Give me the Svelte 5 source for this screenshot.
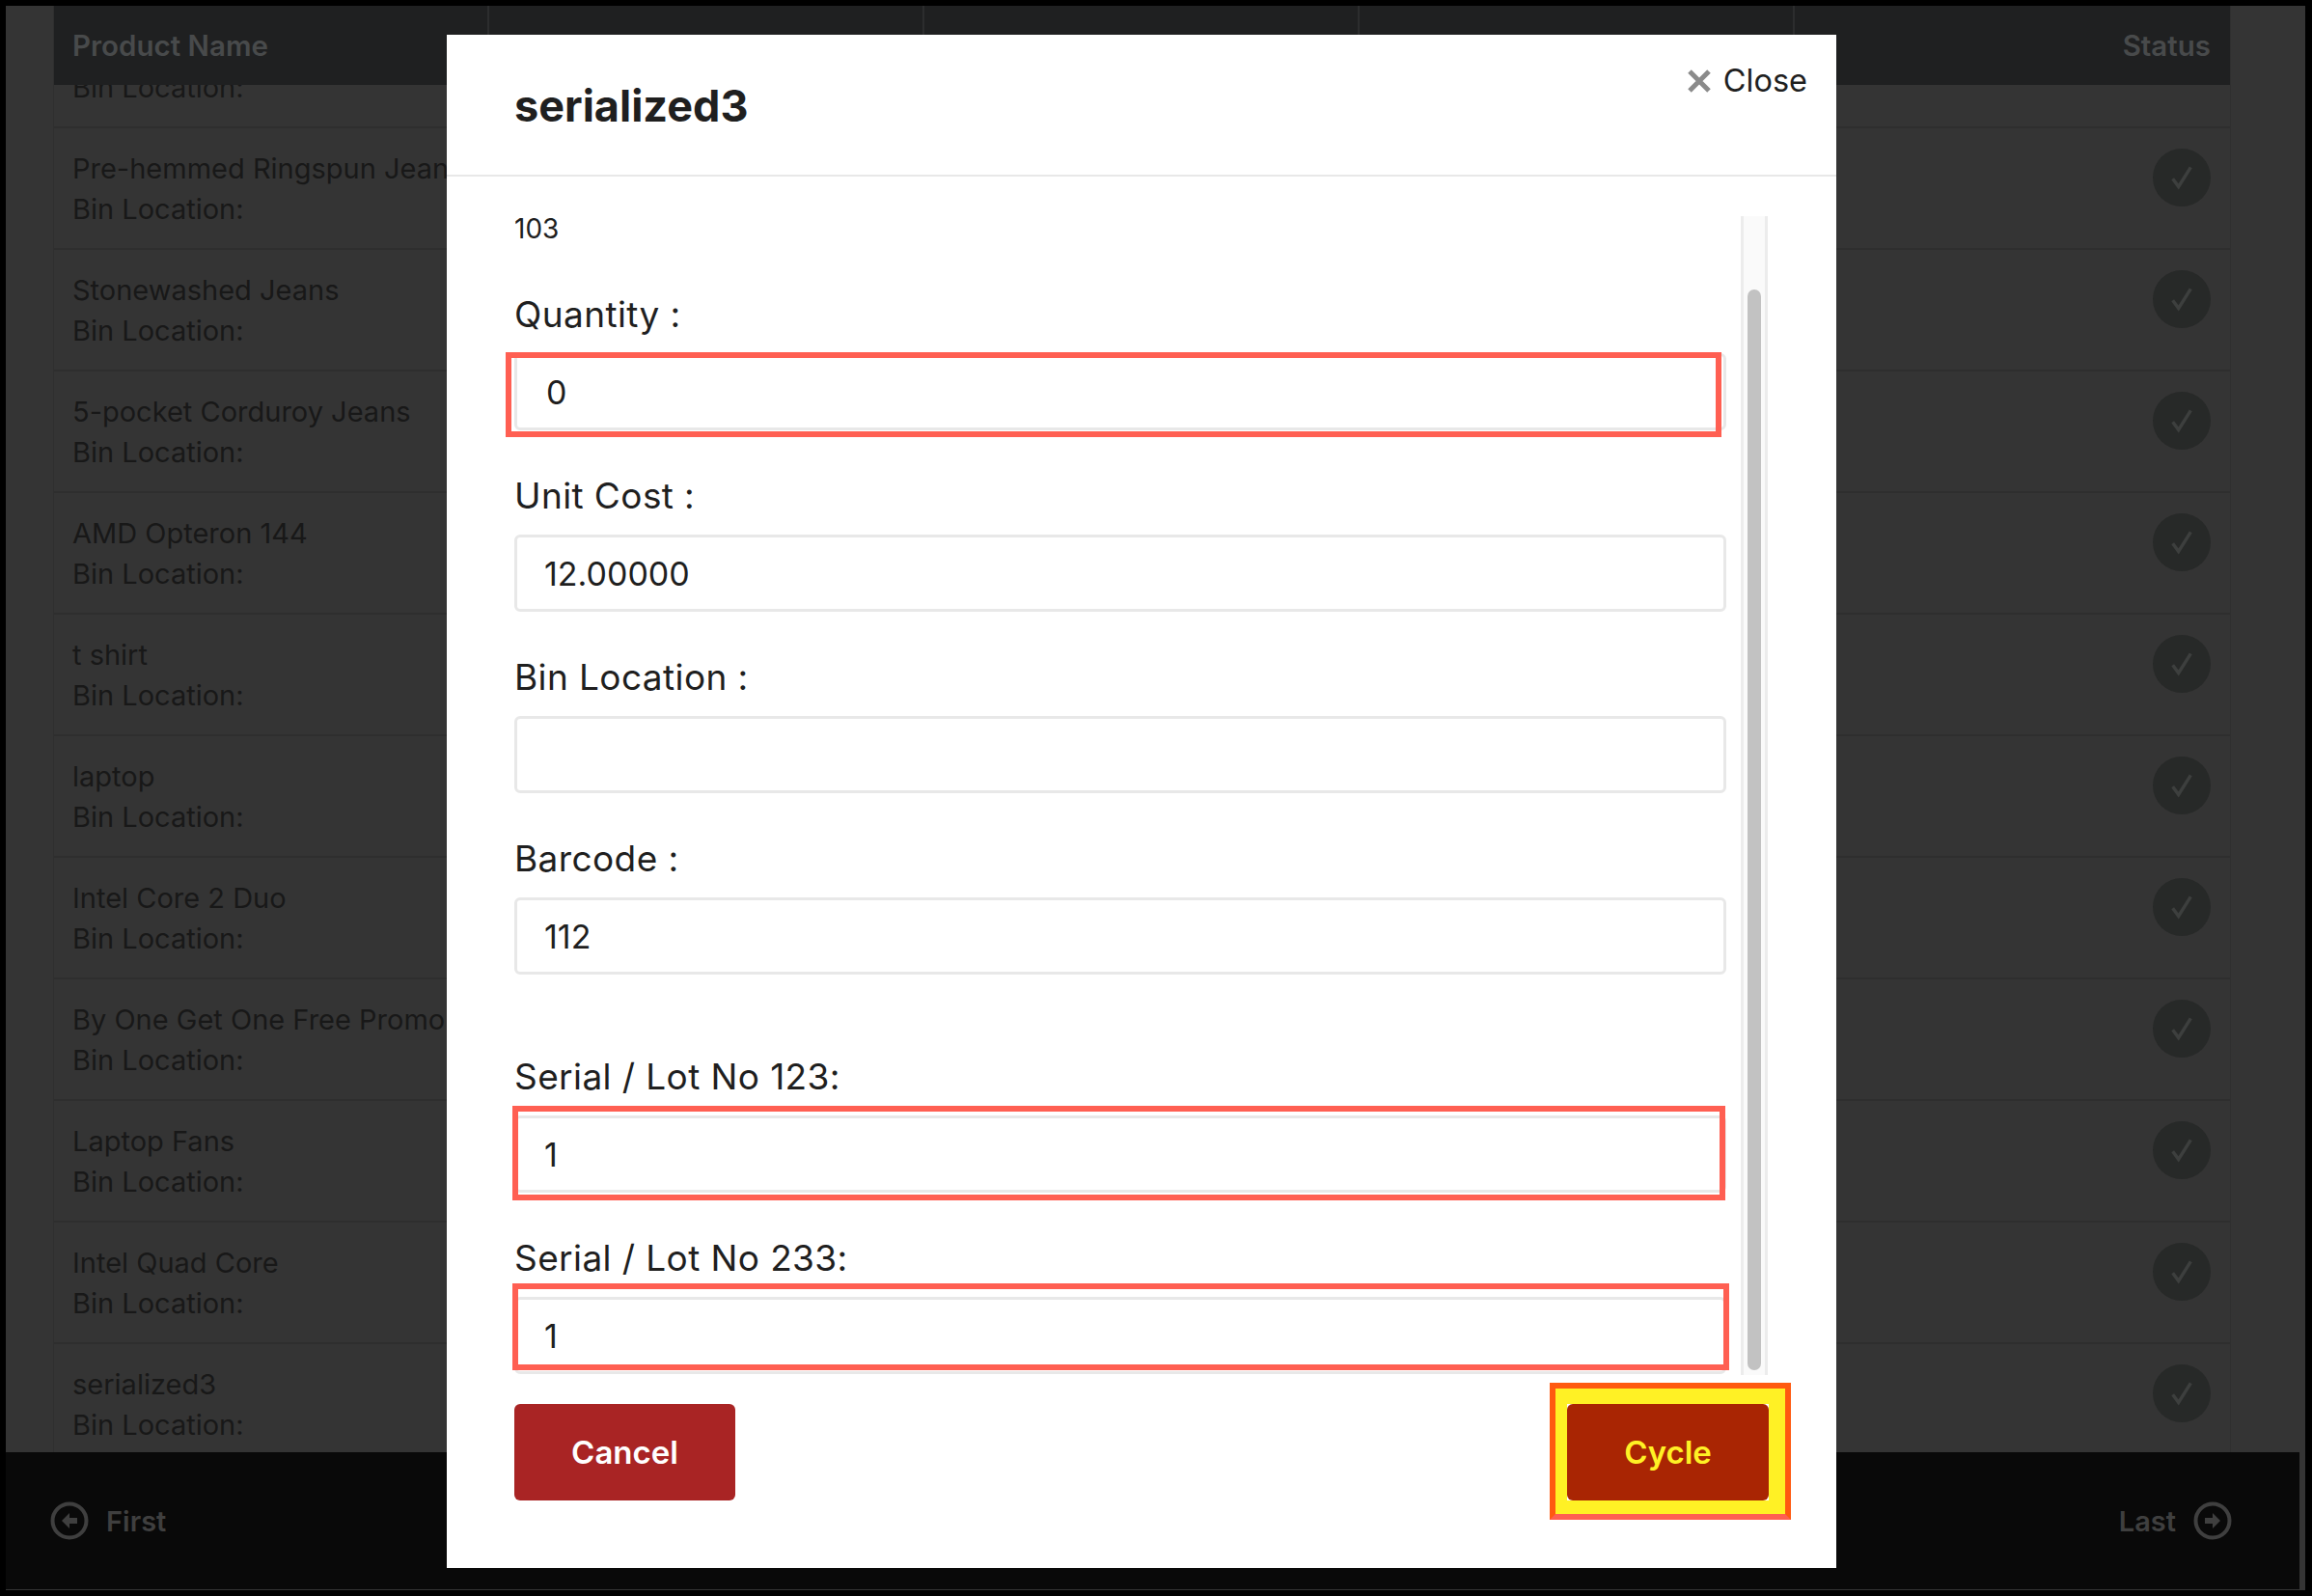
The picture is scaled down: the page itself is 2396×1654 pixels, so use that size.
<script>
  const rows = ['Pre-hemmed Ringspun Jeans','Stonewashed Jeans','5-pocket Corduroy Jeans','AMD Opteron 144','t shirt','laptop','Intel Core 2 Duo','By One Get One Free Promo','Laptop Fans','Intel Quad Core','serialized3'];
  const cols = ['Product Name','','','','Status'];
</script>

{#snippet check()}
  <span class="check">
    <svg width="32" height="32" viewBox="0 0 24 24"><path d="M5 13l4.5 6L19 4" fill="none" stroke="#3d3f3e" stroke-width="2.6"/></svg>
  </span>
{/snippet}

{#snippet row(name)}
  <div class="row">
    <div class="info"><div>{name}</div><div>Bin Location:</div></div>
    {@render check()}
  </div>
{/snippet}

<div class="frame">
  <div class="table">
    <div class="thead">
      {#each cols as c}<div class="th">{c}</div>{/each}
    </div>
    <div class="tbody">
      <div class="first">{@render row('')}</div>
      {#each rows as name}{@render row(name)}{/each}
    </div>
  </div>
  <div class="pager">
    <div class="nav">
      <svg width="40" height="40" viewBox="0 0 40 40"><circle cx="20" cy="20" r="17.5" fill="none" stroke="#3f3f3f" stroke-width="4"/><path d="M20 12l-8 8 8 8v-5h8v-6h-8z" fill="#3f3f3f"/></svg>
      <span>First</span>
    </div>
    <div class="nav">
      <span>Last</span>
      <svg width="40" height="40" viewBox="0 0 40 40"><circle cx="20" cy="20" r="17.5" fill="none" stroke="#3f3f3f" stroke-width="4"/><path d="M20 12l8 8-8 8v-5h-8v-6h8z" fill="#3f3f3f"/></svg>
    </div>
  </div>
</div>

<div class="modal">
  <header>
    <h2>serialized3</h2>
    <button class="close">
      <svg width="24" height="24" viewBox="0 0 24 24"><path d="M2 2l20 20M22 2L2 22" stroke="#8a8a8a" stroke-width="5"/></svg>
      Close
    </button>
  </header>
  <div class="body">
    <div class="scroll">
      <div class="sku">103</div>
      <div class="field">
        <label for="q">Quantity :</label>
        <div class="wrap"><input id="q" value="0" class="indent" /><i class="mark m-q"></i></div>
      </div>
      <div class="field">
        <label for="u">Unit Cost :</label>
        <div class="wrap"><input id="u" value="12.00000" /></div>
      </div>
      <div class="field">
        <label for="b">Bin Location :</label>
        <div class="wrap"><input id="b" value="" /></div>
      </div>
      <div class="field">
        <label for="c">Barcode :</label>
        <div class="wrap"><input id="c" value="112" /></div>
      </div>
      <div class="field serial">
        <label for="s1">Serial / Lot No 123:</label>
        <div class="wrap"><input id="s1" value="1" /><i class="mark m-1"></i></div>
      </div>
      <div class="field">
        <label for="s2">Serial / Lot No 233:</label>
        <div class="wrap"><input id="s2" value="1" /><i class="mark m-2"></i></div>
      </div>
    </div>
    <div class="track"><div class="thumb"></div></div>
  </div>
  <div class="actions">
    <button class="btn cancel">Cancel</button>
    <button class="btn cycle">Cycle<i class="hl"></i></button>
  </div>
</div>

<style>
  :global(body) { margin: 0; background: #000; font-family: Inter, "Liberation Sans", sans-serif; }
  .frame { box-sizing: border-box; margin: 6px 0 0 6px; width: 2383px; height: 1642px; background: #343434; display: flex; flex-direction: column; overflow: hidden; }
  .table { flex: none; height: 1499px; margin: 0 77px 0 49px; display: flex; flex-direction: column; border-right: 1px solid #2f2f2f; border-left: 1px solid #2f2f2f; }
  .thead { flex: none; height: 82px; display: grid; grid-template-columns: repeat(5, 1fr); background: #1f2021; position: relative; z-index: 1; }
  .th { font-size: 29.5px; font-weight: 600; color: #484a4b; display: flex; align-items: center; padding: 0 20px 0 19px; border-right: 2px solid #2c2d2e; }
  .th:last-child { justify-content: flex-end; border-right: 0; }
  .tbody { flex: 1; overflow: hidden; }
  .first { margin-top: -81px; }
  .row { box-sizing: border-box; height: 126px; display: flex; justify-content: space-between; align-items: flex-start; padding: 21px 20px 0 19px; border-bottom: 2px solid #2e2e2e; color: #181818; font-size: 29px; }
  .info { line-height: 42px; white-space: nowrap; }
  .info div { min-height: 42px; }
  .check { width: 60px; height: 60px; border-radius: 50%; background: #272928; display: flex; align-items: center; justify-content: center; }
  .pager { flex: none; margin-right: 6px; height: 142px; background: #090909; display: flex; justify-content: space-between; align-items: center; padding: 0 70px 0 46px; }
  .nav { display: flex; align-items: center; gap: 18px; font-size: 29px; font-weight: 600; color: #3f3f3f; }

  .modal { position: absolute; z-index: 2; left: 463px; top: 36px; width: 1440px; height: 1589px; background: #fff; display: flex; flex-direction: column; color: #1f1f1f; }
  header { flex: none; height: 147px; box-sizing: border-box; border-bottom: 2px solid #e8e8e8; display: flex; justify-content: space-between; align-items: flex-start; padding: 0 30px 0 70px; }
  h2 { margin: 50px 0 0; font-size: 45px; line-height: 48px; font-weight: 700; }
  .close { margin-top: 28px; background: none; border: 0; padding: 0; display: flex; align-items: center; gap: 13px; font: inherit; font-size: 32.5px; line-height: 40px; color: #1f1f1f; }
  .body { flex: none; height: 1201px; margin: 41px 71px 0 70px; display: flex; gap: 15px; }
  .scroll { flex: 1; min-width: 0; overflow: hidden; margin: -4px -4px 0 -10px; padding: 0 4px 0 10px; }
  .sku { font-size: 28px; line-height: 34px; height: 34px; margin-bottom: 50px; }
  .field { margin-bottom: 46px; }
  .field label { display: block; font-size: 37px; letter-spacing: .4px; line-height: 44px; margin-bottom: 18px; }
  .serial { margin-top: 84px; margin-bottom: 46px; }
  .wrap { position: relative; }
  input { box-sizing: border-box; display: block; width: 100%; height: 80px; border: 3px solid #e8e8e8; border-radius: 6px; padding: 0 28px; font: inherit; font-size: 34px; color: #1f1f1f; background: #fff; outline: 0; }
  input.indent { padding-left: 30px; }
  .mark { position: absolute; box-sizing: border-box; border: 6px solid #ff5f52; pointer-events: none; }
  .m-q { left: -9px; top: -1px; width: 1260px; height: 88px; }
  .m-1 { left: -2px; top: -10px; width: 1257px; height: 98px; }
  .m-2 { left: -2px; top: -14px; width: 1261px; height: 90px; }
  .track { flex: none; box-sizing: border-box; width: 28px; background: #fafafa; border-left: 3px solid #ececec; border-right: 3px solid #ececec; padding: 76px 4px 5px 4px; }
  .thumb { height: 100%; border-radius: 8px; background: #c2c2c2; }
  .actions { flex: none; margin: 30px 70px 0; display: flex; justify-content: space-between; }
  .btn { position: relative; border: 0; border-radius: 6px; height: 100px; font: inherit; font-size: 33px; font-weight: 600; }
  .cancel { width: 229px; background: #a92424; color: #fff; }
  .cycle { width: 209px; background: #a92503; color: #fff125; }
  .hl { position: absolute; box-sizing: border-box; left: -18px; top: -22px; width: 250px; height: 142px; border: 6px solid #ff5a10; border-bottom-color: #ff5f52; pointer-events: none; background: linear-gradient(#fff125,#fff125) top/100% 16px no-repeat, linear-gradient(#fff125,#fff125) bottom/100% 14px no-repeat, linear-gradient(#fff125,#fff125) left/12px 100% no-repeat, linear-gradient(#fff125,#fff125) right/17px 100% no-repeat; }
</style>
